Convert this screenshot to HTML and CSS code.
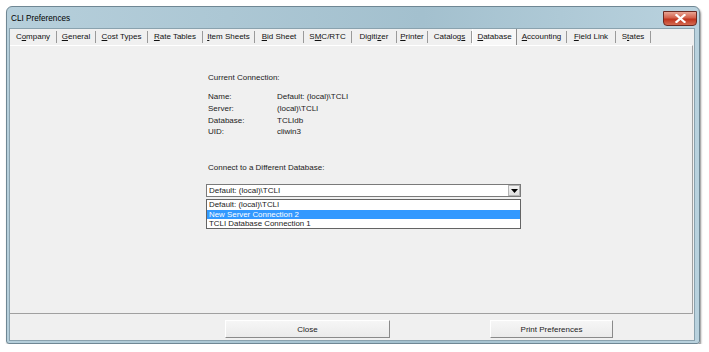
FILE: index.html
```html
<!DOCTYPE html>
<html lang="en">
<head>
    <meta charset="UTF-8">
    <meta name="viewport" content="width=device-width, initial-scale=1.0">
    <title>CLI Preferences</title>
    <link rel="stylesheet" href="styles.css">
</head>
<body>
    <div class="window">
        <!-- Title bar -->
        <div class="titlebar">
            <span class="title">CLI Preferences</span>
            <button class="close-x" aria-label="Close">
                <svg width="11" height="9" viewBox="0 0 11 9">
                    <path d="M1.5 1 L9.5 8 M9.5 1 L1.5 8" stroke="#fff" stroke-width="2.2" stroke-linecap="square"/>
                </svg>
            </button>
        </div>

        <div class="client">
            <!-- Tabs -->
            <div class="tabs">
                <div class="tab">C<u>o</u>mpany</div>
                <div class="tab"><u>G</u>eneral</div>
                <div class="tab"><u>C</u>ost Types</div>
                <div class="tab"><u>R</u>ate Tables</div>
                <div class="tab"><u>I</u>tem Sheets</div>
                <div class="tab"><u>B</u>id Sheet</div>
                <div class="tab">S<u>M</u>C/RTC</div>
                <div class="tab">Digiti<u>z</u>er</div>
                <div class="tab"><u>P</u>rinter</div>
                <div class="tab">Catalog<u>s</u></div>
                <div class="tab active"><u>D</u>atabase</div>
                <div class="tab"><u>A</u>ccounting</div>
                <div class="tab"><u>F</u>ield Link</div>
                <div class="tab">S<u>t</u>ates</div>
            </div>

            <!-- Database page -->
            <div class="panel">
                <div class="content">
                    <p class="heading">Current Connection:</p>
                    <div class="info">
                        <span>Name:</span><span>Default: (local)\TCLI</span>
                        <span>Server:</span><span>(local)\TCLI</span>
                        <span>Database:</span><span>TCLIdb</span>
                        <span>UID:</span><span>cliwin3</span>
                    </div>

                    <p class="heading connect">Connect to a Different Database:</p>
                    <div class="combo">
                        <span class="combo-text">Default: (local)\TCLI</span>
                        <span class="combo-btn">
                            <svg width="7" height="4" viewBox="0 0 7 4"><path d="M0 0 H7 L3.5 4 Z" fill="#000"/></svg>
                        </span>
                    </div>
                    <div class="droplist">
                        <div class="item">Default: (local)\TCLI</div>
                        <div class="item selected">New Server Connection 2</div>
                        <div class="item">TCLI Database Connection 1</div>
                    </div>
                </div>
            </div>

            <!-- Bottom buttons -->
            <div class="footer">
                <button class="btn btn-close">Close</button>
                <button class="btn btn-print">Print Preferences</button>
            </div>
        </div>
    </div>
</body>
</html>
```

FILE: styles.css
```css
body {
    margin: 0;
    padding: 6px 0 0 6px;
    background-color: #ffffff;
    font-family: "Liberation Sans", Arial, sans-serif;
    font-size: 8px;
    color: #222;
}

/* Window frame */
.window {
    width: 694px;
    height: 338px;
    box-sizing: border-box;
    display: flex;
    flex-direction: column;
    padding: 0 4px 2px 2px;
    background: linear-gradient(to right, #b6cfdb, #a3c0ce 60%, #b9d2de);
    border: 1px solid #6f8794;
    border-radius: 6px 6px 3px 3px;
    box-shadow: 1px 2px 2px rgba(0, 0, 0, 0.45);
}
.titlebar {
    height: 21px;
    display: flex;
    align-items: center;
    justify-content: space-between;
    flex-shrink: 0;
}
.title {
    padding-left: 2px;
    padding-top: 1px;
    color: #000;
    font-size: 8.2px;
}
.close-x {
    width: 34px;
    height: 15px;
    margin-top: 1px;
    margin-right: -2px;
    padding: 0;
    border: 1px solid #6b2a22;
    border-radius: 0 0 4px 4px;
    background: linear-gradient(to bottom, #e8a493, #d3614b 45%, #c0341d 55%, #d46b52);
    display: flex;
    align-items: center;
    justify-content: center;
}

/* Client area */
.client {
    flex: 1;
    display: flex;
    flex-direction: column;
    background-color: #f0f0f0;
    border: 1px solid #8aa2ae;
}
.tabs {
    display: flex;
    height: 15px;
    padding-top: 1px;
    flex-shrink: 0;
}
.tab {
    box-sizing: border-box;
    text-align: center;
    border-right: 1px solid #9a9a9a;
    height: 12px;
    margin-top: 1px;
    line-height: 12px;
    white-space: nowrap;
    color: #111;
}
.tab:nth-child(1) { width: 47px; }
.tab:nth-child(2) { width: 39px; }
.tab:nth-child(3) { width: 52px; }
.tab:nth-child(4) { width: 55px; }
.tab:nth-child(5) { width: 52px; }
.tab:nth-child(6) { width: 49px; }
.tab:nth-child(7) { width: 48px; }
.tab:nth-child(8) { width: 45px; }
.tab:nth-child(9) { width: 31px; }
.tab:nth-child(10) { width: 44px; }
.tab:nth-child(11) { width: 45px; }
.tab:nth-child(12) { width: 50px; }
.tab:nth-child(13) { width: 49px; }
.tab:nth-child(14) { width: 35px; }
.tab.active {
    background-color: #f7f7f7;
    border-left: 1px solid #ffffff;
    border-right: 1px solid #8c8c8c;
    margin-top: -1px;
    height: 16px;
    line-height: 15px;
}
.panel {
    flex: 1;
    margin-right: 1px;
    border-top: 1px solid #ffffff;
    border-right: 1px solid #a0a0a0;
    border-bottom: 1px solid #a0a0a0;
    background-color: #f0f0f0;
}
.content {
    padding: 26px 0 0 196px;
    width: 315px;
}
.heading {
    margin: 0 0 7px 2px;
    line-height: 12px;
}
.info {
    display: grid;
    grid-template-columns: 69px auto;
    margin-left: 2px;
    line-height: 11.8px;
}
.connect {
    margin-top: 24px;
    margin-bottom: 10px;
}

/* Combo box with open list */
.combo {
    height: 13px;
    box-sizing: border-box;
    border: 1px solid #7a7a7a;
    background-color: #fff;
    display: flex;
    justify-content: space-between;
    align-items: center;
}
.combo-text {
    padding-left: 2px;
    line-height: 11px;
}
.combo-btn {
    width: 12px;
    height: 11px;
    box-sizing: border-box;
    border: 1px solid #b4b4b4;
    background: linear-gradient(to bottom, #f4f4f4, #dedede);
    display: flex;
    align-items: center;
    justify-content: center;
}
.droplist {
    margin-top: 2px;
    border: 1px solid #646464;
    background-color: #fff;
    font-size: 7.9px;
}
.item {
    height: 9.4px;
    line-height: 9.4px;
    padding-left: 2px;
    white-space: nowrap;
}
.item.selected {
    background-color: #3399ff;
    color: #fff;
}

/* Footer buttons */
.footer {
    height: 26px;
    box-sizing: border-box;
    display: flex;
    align-items: flex-end;
    gap: 100px;
    padding: 0 0 2px 215px;
    flex-shrink: 0;
}
.btn {
    height: 18px;
    padding: 0;
    font-family: "Liberation Sans", Arial, sans-serif;
    font-size: 8px;
    color: #222;
    background: linear-gradient(to bottom, #f6f6f6, #ebebeb);
    border-top: 1px solid #ffffff;
    border-left: 1px solid #ffffff;
    border-right: 1px solid #8a8a8a;
    border-bottom: 1px solid #8a8a8a;
}
.btn-close {
    width: 165px;
}
.btn-print {
    width: 123px;
}
```
